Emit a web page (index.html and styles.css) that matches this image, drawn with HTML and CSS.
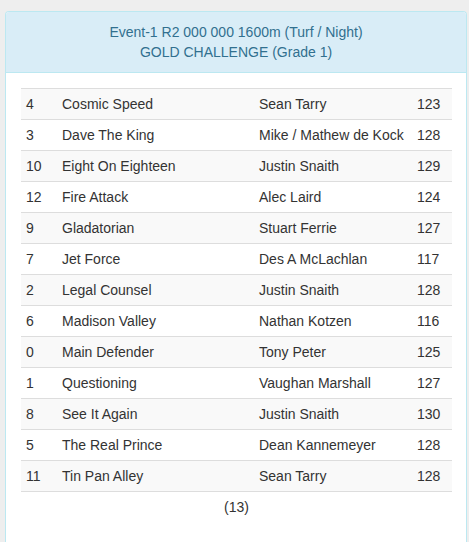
FILE: index.html
```html
<!DOCTYPE html>
<html>
<head>
<meta charset="utf-8">
<link rel="stylesheet" href="styles.css">
</head>
<body>
<div class="panel">
  <div class="panel-heading">
    <div>Event-1 R2 000 000 1600m (Turf / Night)</div>
    <div>GOLD CHALLENGE (Grade 1)</div>
  </div>
  <div class="panel-body">
    <table class="runners">
      <colgroup>
        <col class="c-no"><col class="c-horse"><col class="c-jockey"><col class="c-wt">
      </colgroup>
      <tbody>
        <tr><td>4</td><td>Cosmic Speed</td><td>Sean Tarry</td><td>123</td></tr>
        <tr><td>3</td><td>Dave The King</td><td>Mike / Mathew de Kock</td><td>128</td></tr>
        <tr><td>10</td><td>Eight On Eighteen</td><td>Justin Snaith</td><td>129</td></tr>
        <tr><td>12</td><td>Fire Attack</td><td>Alec Laird</td><td>124</td></tr>
        <tr><td>9</td><td>Gladatorian</td><td>Stuart Ferrie</td><td>127</td></tr>
        <tr><td>7</td><td>Jet Force</td><td>Des A McLachlan</td><td>117</td></tr>
        <tr><td>2</td><td>Legal Counsel</td><td>Justin Snaith</td><td>128</td></tr>
        <tr><td>6</td><td>Madison Valley</td><td>Nathan Kotzen</td><td>116</td></tr>
        <tr><td>0</td><td>Main Defender</td><td>Tony Peter</td><td>125</td></tr>
        <tr><td>1</td><td>Questioning</td><td>Vaughan Marshall</td><td>127</td></tr>
        <tr><td>8</td><td>See It Again</td><td>Justin Snaith</td><td>130</td></tr>
        <tr><td>5</td><td>The Real Prince</td><td>Dean Kannemeyer</td><td>128</td></tr>
        <tr><td>11</td><td>Tin Pan Alley</td><td>Sean Tarry</td><td>128</td></tr>
      </tbody>
      <tfoot>
        <tr><td colspan="4" class="count">(13)</td></tr>
      </tfoot>
    </table>
  </div>
</div>
</body>
</html>
```
FILE: styles.css
```css
html, body {
  margin: 0;
  padding: 0;
}
body {
  background: #eeeeee;
  font-family: "Liberation Sans", Arial, sans-serif;
  font-size: 14px;
  line-height: 20px;
  color: #333333;
  padding: 11px 2px 0 5px;
  height: 542px;
  box-sizing: border-box;
  overflow: hidden;
}
.panel {
  background: #ffffff;
  border: 1px solid #bce8f1;
  border-bottom: 0;
  border-radius: 4px 4px 0 0;
  height: 100%;
  box-sizing: border-box;
}
.panel-heading {
  background: #d9edf7;
  color: #31708f;
  text-align: center;
  padding: 10px 15px;
  border-bottom: 1px solid #bce8f1;
  border-radius: 3px 3px 0 0;
}
.panel-body {
  padding: 15px;
}
.runners {
  width: 100%;
  border-collapse: collapse;
  border-spacing: 0;
  table-layout: fixed;
}
.c-no { width: 36px; }
.c-horse { width: 197px; }
.c-jockey { width: 158px; }
.c-wt { width: 40px; }
.runners td {
  padding: 5px;
  border-top: 1px solid #dddddd;
  white-space: nowrap;
  vertical-align: top;
}
.runners tbody tr:nth-child(odd) td {
  background: #f9f9f9;
}
.runners .count {
  text-align: center;
}
```
